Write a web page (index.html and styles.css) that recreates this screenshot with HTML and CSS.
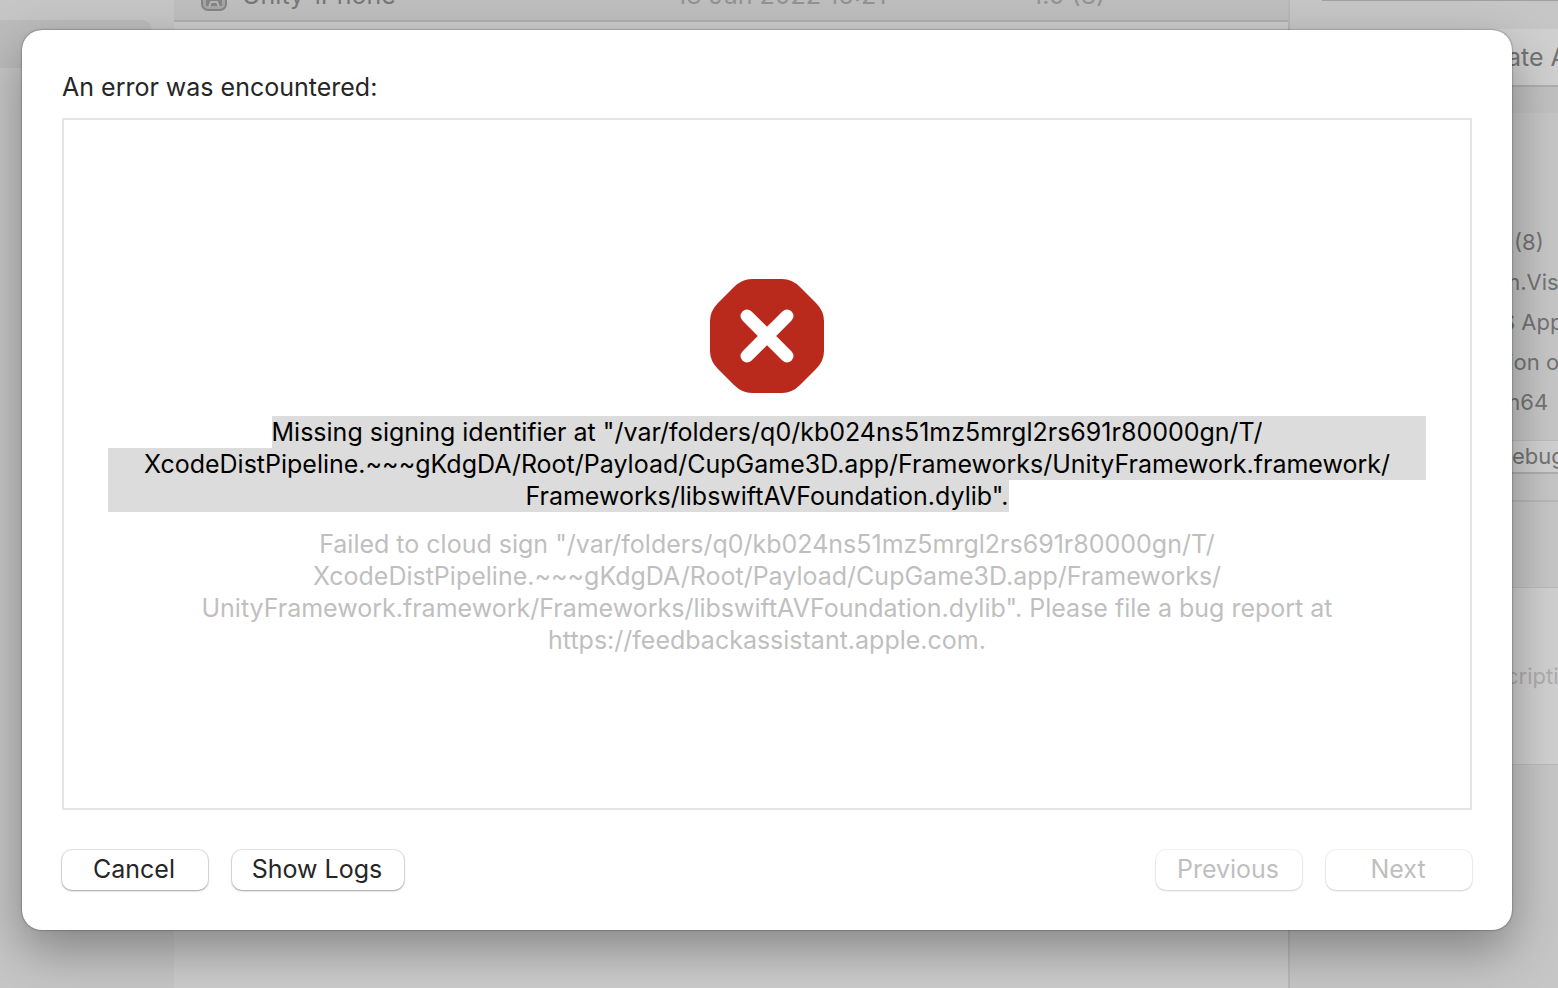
FILE: index.html
```
<!DOCTYPE html>
<html lang="en">
<head>
<meta charset="utf-8">
<title>Distribute App</title>
<link rel="stylesheet" href="styles.css">
</head>
<body>
<div class="app" aria-hidden="true">
  <aside class="sidebar"><div class="sidebar-selection"></div></aside>
  <main class="archives">
    <div class="archive-row">
      <svg class="archive-icon" width="26" height="26" viewBox="0 0 26 26" fill="none" stroke="currentColor"><rect x="1" y="1" width="24" height="24" rx="6" fill="#a6a6a6" stroke-width="2"/><path d="M5 5H21V21H5Z" fill="currentColor" stroke="none"/><path d="M8 22l2-5h6l2 5" stroke="#b4b4b4" stroke-width="2"/></svg>
      <span class="archive-name">Unity-iPhone</span>
      <span class="archive-date">18 Jun 2022 16:21</span>
      <span class="archive-version">1.0 (8)</span>
    </div>
  </main>
  <aside class="inspector">
    <div class="inspector-top"></div>
    <div class="validate">ate App</div>
    <div class="details">
      <div class="detail"><span>(8)</span></div>
      <div class="detail"><span>m.Visi</span></div>
      <div class="detail"><span>S App</span></div>
      <div class="detail"><span>tion on</span></div>
      <div class="detail"><span>m64</span></div>
      <div class="debug">ebug</div>
    </div>
    <div class="separator"></div>
    <div class="description">cripti</div>
  </aside>
</div>
<div class="overlay">
  <section class="dialog" role="dialog" aria-labelledby="dialog-title">
    <h1 class="title" id="dialog-title">An error was encountered:</h1>
    <div class="report">
      <svg class="stop" width="114" height="114" viewBox="0 0 114 114" role="img" aria-label="Error"><path d="M42 0H72Q82 0 90 8L106 24Q114 32 114 42V72Q114 82 106 90L90 106Q82 114 72 114H42Q32 114 24 106L8 90Q0 82 0 72V42Q0 32 8 24L24 8Q32 0 42 0Z" fill="#b9291c"/><path d="M37 37L77 77M77 37L37 77" stroke="#fff" stroke-width="13" stroke-linecap="round"/></svg>
      <div class="message">
        <div class="line from-text"><span>Missing signing identifier at "/var/folders/q0/kb024ns51mz5mrgl2rs691r80000gn/T/</span></div>
        <div class="line full"><span>XcodeDistPipeline.~~~gKdgDA/Root/Payload/CupGame3D.app/Frameworks/UnityFramework.framework/</span></div>
        <div class="line to-text"><span>Frameworks/libswiftAVFoundation.dylib".</span></div>
      </div>
      <p class="hint">Failed to cloud sign "/var/folders/q0/kb024ns51mz5mrgl2rs691r80000gn/T/<br>XcodeDistPipeline.~~~gKdgDA/Root/Payload/CupGame3D.app/Frameworks/<br>UnityFramework.framework/Frameworks/libswiftAVFoundation.dylib". Please file a bug report at<br>https://feedbackassistant.apple.com.</p>
    </div>
    <div class="actions">
      <button class="button" type="button">Cancel</button>
      <button class="button wide" type="button">Show Logs</button>
      <span class="spring"></span>
      <button class="button" type="button" disabled>Previous</button>
      <button class="button" type="button" disabled>Next</button>
    </div>
  </section>
</div>
</body>
</html>
```
FILE: styles.css
```
* { box-sizing: border-box; }
html, body { height: 100%; }
body {
  margin: 0;
  position: relative;
  overflow: hidden;
  font-family: Inter, "Liberation Sans", sans-serif;
  font-size: 25px;
  line-height: 32px;
  color: #262626;
}
.app { display: flex; height: 100%; background: #cccccc; color: #777; white-space: nowrap; }
.sidebar { width: 174px; padding-top: 20px; background: #c6c6c6; }
.sidebar-selection { height: 48px; margin-right: 22px; background: #bcbcbc; border-radius: 0 10px 10px 0; }
.archives { flex: 1; min-width: 0; }
.archive-row {
  display: flex;
  align-items: flex-end;
  height: 22px;
  padding: 0 0 9px 27px;
  overflow: hidden;
  background: #bebebe;
  border-bottom: 2px solid #b0b0b0;
}
.archive-icon { flex: none; margin-right: 15px; color: #858585; }
.archive-name { flex: 0 0 434px; }
.archive-date { flex: 0 0 356px; color: #939393; }
.archive-version { color: #939393; }
.inspector {
  flex: 0 0 270px;
  overflow: hidden;
  background: #c6c6c6;
  border-left: 2px solid #b8b8b8;
  font-size: 22px;
  color: #737373;
}
.inspector-top { height: 29px; margin-left: 32px; border-top: 1px solid #a0a0a0; }
.validate {
  height: 58px;
  padding-left: 217px;
  background: #d0d0d0;
  border-bottom: 2px solid #aeaeae;
  font-size: 25px;
  line-height: 56px;
}
.details { padding: 109px 0 26px; border-top: 26px solid #c1c1c1; border-bottom: 2px solid #b8b8b8; }
.detail { line-height: 40px; padding-left: 211px; }
.detail:first-child { padding-left: 224px; }
.debug {
  height: 34px;
  margin-top: 18px;
  padding-left: 222px;
  background: #d0d0d0;
  border-top: 1px solid #bcbcbc;
  border-bottom: 2px solid #aeaeae;
  line-height: 30px;
}
.separator { height: 85px; }
.description {
  height: 178px;
  padding-left: 216px;
  background: #d0d0d0;
  border-top: 1px solid #bababa;
  border-bottom: 1px solid #bababa;
  color: #adadad;
  line-height: 176px;
}
.overlay { position: absolute; inset: 0; display: flex; padding: 30px 46px 58px 22px; }
.dialog {
  flex: 1;
  min-width: 0;
  display: flex;
  flex-direction: column;
  padding: 41px 40px 40px;
  background: #fff;
  border-radius: 20px;
  box-shadow: 0 0 2px rgba(0, 0, 0, .6), 0 20px 50px rgba(0, 0, 0, .34);
}
.title { margin: 0 0 15px; font-size: 25px; font-weight: 400; line-height: 32px; }
.report {
  flex: 1;
  display: flex;
  flex-direction: column;
  align-items: center;
  justify-content: center;
  padding: 7px 44px 0;
  border: 2px solid #e4e4e4;
}
.stop { flex: none; margin-bottom: 23px; }
.message { align-self: stretch; color: #000; }
.line { display: flex; white-space: nowrap; }
.line::before, .line::after { content: ""; flex: 1; }
.line span, .from-text::after, .full::before, .full::after, .to-text::before { background: #dcdcdc; }
.hint { margin: 16px 0 0; text-align: center; color: #bfbfbf; }
.actions { display: flex; gap: 24px; margin-top: 40px; }
.spring { flex: 1; }
.button {
  width: 146px;
  height: 40px;
  padding: 0 2px 2px 0;
  border: 0;
  border-radius: 10px;
  background: #fff;
  box-shadow: 0 0 1px 1px rgba(0, 0, 0, .1), 0 1px 2px rgba(0, 0, 0, .3);
  color: #262626;
  font: inherit;
}
.wide { width: 172px; }
.button:disabled { color: #bfbfbf; box-shadow: 0 0 1px 1px rgba(0, 0, 0, .05), 0 1px 2px rgba(0, 0, 0, .15); }
```
